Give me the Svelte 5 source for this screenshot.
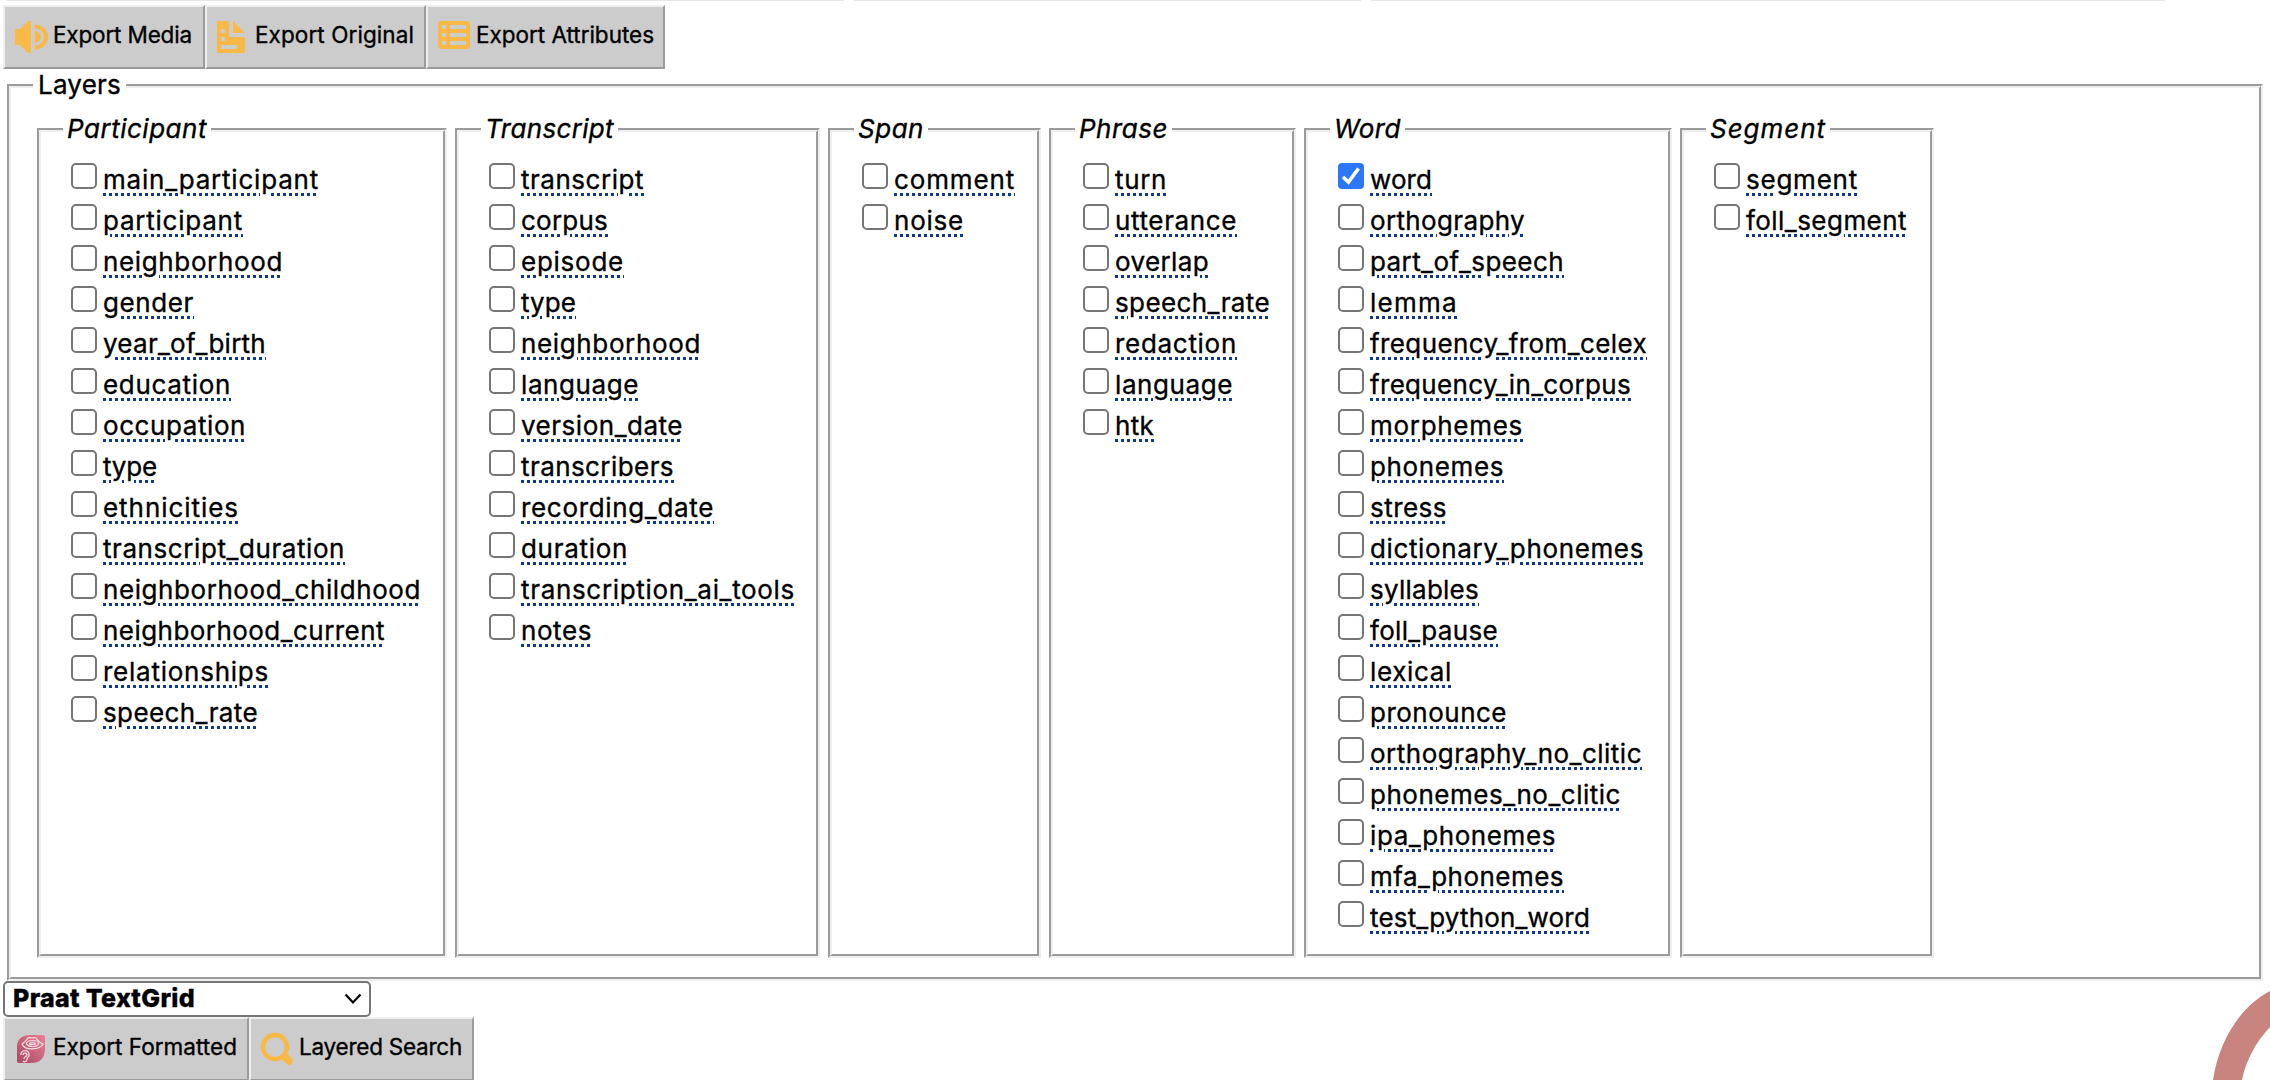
<script>
  const groups = [
    { name: 'Participant', legend: 140, width: 410, gap: 8, items: [
      ['main_participant', 216], ['participant', 140], ['neighborhood', 180], ['gender', 91],
      ['year_of_birth', 163], ['education', 128], ['occupation', 143], ['type', 54],
      ['ethnicities', 136], ['transcript_duration', 242], ['neighborhood_childhood', 318],
      ['neighborhood_current', 282], ['relationships', 166], ['speech_rate', 155]] },
    { name: 'Transcript', legend: 129, width: 365, gap: 8, items: [
      ['transcript', 123], ['corpus', 87], ['episode', 103], ['type', 55], ['neighborhood', 180],
      ['language', 118], ['version_date', 162], ['transcribers', 153], ['recording_date', 193],
      ['duration', 107], ['transcription_ai_tools', 274], ['notes', 71]] },
    { name: 'Span', legend: 66, width: 213, gap: 8, items: [['comment', 121], ['noise', 70]] },
    { name: 'Phrase', legend: 89, width: 247, gap: 8, items: [
      ['turn', 52], ['utterance', 122], ['overlap', 94], ['speech_rate', 155],
      ['redaction', 122], ['language', 118], ['htk', 39]] },
    { name: 'Word', legend: 67, width: 368, gap: 8, items: [
      ['word', 62], ['orthography', 155], ['part_of_speech', 194], ['lemma', 88],
      ['frequency_from_celex', 277], ['frequency_in_corpus', 261], ['morphemes', 153],
      ['phonemes', 134], ['stress', 77], ['dictionary_phonemes', 274], ['syllables', 109],
      ['foll_pause', 128], ['lexical', 82], ['pronounce', 137], ['orthography_no_clitic', 272],
      ['phonemes_no_clitic', 251], ['ipa_phonemes', 186], ['mfa_phonemes', 194],
      ['test_python_word', 220]] },
    { name: 'Segment', legend: 116, width: 254, gap: 0, items: [['segment', 112], ['foll_segment', 161]] }
  ];

  let checked = $state({ 'Word/word': true });

  // Spreads the letters of a label so that it fills the given width.
  function fit(node, width) {
    const natural = node.getBoundingClientRect().width;
    node.style.letterSpacing = (width - natural) / node.textContent.length + 'px';
  }
</script>

<div class="page">
  <div class="strip"><i></i><i></i><i></i></div>

  <div class="buttons top">
    <button class="media">
      <svg width="34" height="34" viewBox="0 0 34 34"><g fill="#f9b947"><path d="M1 9h5L14 1h3v32h-3L6 25H1z" /><path d="M21 11c8 1 8 11 0 12z" /></g><path d="M21 6.500c15 1 15 20 0 21" fill="none" stroke="#f9b947" stroke-width="4" /></svg>
      <span use:fit={139}>Export Media</span>
    </button>
    <button class="original">
      <svg width="30" height="34" viewBox="0 0 30 34"><path fill="#f9b947" fill-rule="evenodd" d="M1 1h12v16h16v16H1zM5 9v4h4V9zM5 17v4h4v-4zM5 25v4h16v-4zM17 1l12 12H17z" /></svg>
      <span use:fit={159}>Export Original</span>
    </button>
    <button class="attributes">
      <svg width="34" height="34" viewBox="0 0 34 34"><path fill="#f9b947" fill-rule="evenodd" d="M4 1h26q3 0 3 3v22q0 3-3 3H4q-3 0-3-3V4q0-3 3-3zM5 5v4h4V5zM13 5v4h16V5zM5 13v4h4v-4zM13 13v4h16v-4zM5 21v4h4v-4zM13 21v4h16v-4z" /></svg>
      <span use:fit={178}>Export Attributes</span>
    </button>
  </div>

  <fieldset class="layers">
    <legend><span use:fit={83}>Layers</span></legend>
    <div class="groups">
      {#each groups as group}
        <fieldset class="group" style:width="{group.width}px" style:margin-right="{group.gap}px">
          <legend><em use:fit={group.legend}>{group.name}</em></legend>
          {#each group.items as [label, width]}
            <label>
              <input type="checkbox" bind:checked={checked[group.name + '/' + label]} />
              <svg class="box" width="26" height="26" viewBox="0 0 26 26">
                {#if checked[group.name + '/' + label]}
                  <rect width="26" height="26" rx="4" fill="#2b77f8" />
                  <path d="M5 14l5.500 5L20.500 5.500" fill="none" stroke="#fff" stroke-width="3.600" />
                {:else}
                  <rect x="1" y="1" width="24" height="24" rx="4" fill="#fff" stroke="#767676" stroke-width="2" />
                {/if}
              </svg>
              <span class="name" use:fit={width}>{label}</span>
            </label>
          {/each}
        </fieldset>
      {/each}
    </div>
  </fieldset>

  <div class="select" role="combobox" aria-expanded="false" aria-controls="formats" tabindex="0">
    <b use:fit={182}>Praat TextGrid</b>
    <svg width="18" height="12" viewBox="0 0 18 12"><path d="M1.500 1.500L9 9.500l7.500-8" fill="none" stroke="#000" stroke-width="2.200" /></svg>
  </div>

  <div class="buttons">
    <button class="formatted">
      <svg width="30" height="34" viewBox="0 0 30 34">
        <defs><linearGradient id="petal" x1="1" y1="0" x2="0" y2="1"><stop offset="0" stop-color="#ea8094" /><stop offset="1" stop-color="#a94762" /></linearGradient></defs>
        <path d="M1 15Q1 3 15 3H27q2 0 2 2V16Q29 31 15 31H3q-2 0-2-2z" fill="url(#petal)" />
        <g fill="none" stroke="#f8e3e8" stroke-width="1.200">
          <path d="M6 12c2-1 4-3 6-6 2-1 3 0 4 0s2-1 4 0c2 3 4 5 7 6-3 6-18 7-21 0z" />
          <ellipse cx="16.500" cy="11.500" rx="6" ry="3" /><ellipse cx="16.500" cy="11.500" rx="3" ry="1" />
          <path d="M5 23c-1-5 7-6 8-1 1 3-2 3-2 5s-2 4-4 2M7 23c0-3 4-2 4 0s-3 1-3 4" />
        </g>
      </svg>
      <span use:fit={184}>Export Formatted</span>
    </button>
    <button class="search">
      <svg width="34" height="34" viewBox="0 0 34 34"><g fill="none" stroke="#f9b947"><circle cx="15" cy="15" r="12" stroke-width="4.500" /><path d="M23 23l2 2" stroke-width="5" /><path d="M26 26l3 3" stroke-width="7.500" stroke-linecap="round" /></g></svg>
      <span use:fit={163}>Layered Search</span>
    </button>
  </div>

  <svg class="ring" width="70" height="100" viewBox="0 0 70 100"><path fill="#c98480" d="M13 100C19 60 41 26 70 11V47C56 62 46 80 42 100z" /></svg>
</div>

<style>
  :global(body) { background: #fff; overflow: hidden; }
  .page {
    position: relative;
    box-sizing: border-box;
    width: 2270px;
    height: 1080px;
    overflow: hidden;
    color: #000;
    font: 400 26px Inter, "Liberation Sans", sans-serif;
    -webkit-text-stroke: 0.35px #000;
  }
  .strip { display: grid; grid-template-columns: 837px 507px 794px; column-gap: 10px; height: 5px; padding-left: 7px; }
  .strip i { height: 1px; background: #e6e6e6; }

  .buttons { display: flex; padding-left: 3px; }
  button {
    display: flex;
    align-items: flex-start;
    box-sizing: border-box;
    height: 64px;
    margin: 0;
    padding: 13px 0 0 9px;
    border: 2px outset #efefef;
    border-radius: 0;
    background: #ccc;
    color: #000;
    font: 400 22.500px/30px Inter, "Liberation Sans", sans-serif;
    white-space: nowrap;
    text-align: left;
  }
  button svg { flex: none; }
  button span { margin-left: 5px; }
  .media { width: 202px; }
  .original { width: 221px; }
  .original span { margin-left: 9px; }
  .attributes { width: 239px; }
  .formatted { width: 246px; padding-left: 11px; }
  .formatted span { margin-left: 7px; }
  .search { width: 225px; }

  fieldset { box-sizing: border-box; margin: 0; padding: 0; border: 4px groove #efefef; min-width: 0; }
  legend { height: 34px; line-height: 32px; white-space: nowrap; }
  legend span, legend em { display: inline-block; }
  .layers { width: 2256px; height: 912px; margin-left: 7px; padding: 0 26px; }
  .layers > legend { margin-left: -4px; padding: 0 5px 0 5px; }
  .groups { display: flex; height: 845px; padding-top: 10px; box-sizing: border-box; }
  .group { flex: none; height: 845px; padding: 0 0 0 22px; }
  .group legend { padding: 0 4px 0 4px; }
  label { display: flex; align-items: flex-start; height: 41px; margin-left: 8px; }
  input { position: absolute; opacity: 0; pointer-events: none; }
  .box { flex: none; margin: 16px 6px 0 0; }
  .name {
    line-height: 34px;
    margin-top: 16px;
    white-space: nowrap;
    text-decoration: underline dotted #0d3a8f 3px;
    text-underline-offset: 4px;
  }

  .select {
    display: flex;
    justify-content: space-between;
    align-items: center;
    box-sizing: border-box;
    width: 368px;
    height: 36px;
    margin-left: 3px;
    padding: 0 7px 0 8px;
    border: 2px solid #767676;
    border-radius: 5px;
    background: #fff;
  }
  .select b { line-height: 30px; margin-top: -2px; font-size: 25px; font-weight: 800; }
  .ring { position: absolute; right: 0; bottom: 0; }
</style>
